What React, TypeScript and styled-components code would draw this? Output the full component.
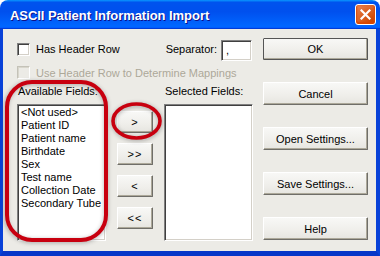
import React from "react";
import styled, { createGlobalStyle } from "styled-components";

const AVAILABLE_FIELDS = [
  "<Not used>",
  "Patient ID",
  "Patient name",
  "Birthdate",
  "Sex",
  "Test name",
  "Collection Date",
  "Secondary Tube",
];

const MOVE_BUTTONS = [">", ">>", "<", "<<"];

const SIDE_BUTTONS = ["Cancel", "Open Settings...", "Save Settings...", "Help"];

const GlobalStyle = createGlobalStyle`
  html, body {
    margin: 0;
    padding: 0;
    background: #ffffff;
  }
  * {
    box-sizing: border-box;
  }
`;

const App = () => {
  return (
    <>
      <GlobalStyle />
      <Window>
        <TitleBar>
          <TitleText>ASCII Patient Information Import</TitleText>
          <CloseButton>
            <svg width="11" height="11" viewBox="0 0 11 11">
              <path d="M1.5 1.5 L9.5 9.5 M9.5 1.5 L1.5 9.5" stroke="#fff" strokeWidth="2.2" strokeLinecap="square" />
            </svg>
          </CloseButton>
        </TitleBar>
        <Body>
          <LeftPanel>
            <TopRow>
              <CheckRow>
                <CheckBox />
                <span>Has Header Row</span>
              </CheckRow>
              <SeparatorGroup>
                <span>Separator:</span>
                <SeparatorInput>,</SeparatorInput>
              </SeparatorGroup>
            </TopRow>
            <CheckRow $disabled>
              <CheckBox $disabled />
              <span>Use Header Row to Determine Mappings</span>
            </CheckRow>
            <FieldsGrid>
              <FieldLabel>Available Fields:</FieldLabel>
              <span />
              <FieldLabel>Selected Fields:</FieldLabel>
              <ListBox>
                {AVAILABLE_FIELDS.map((field) => (
                  <ListItem key={field}>{field}</ListItem>
                ))}
              </ListBox>
              <MoveColumn>
                {MOVE_BUTTONS.map((label) => (
                  <MoveButton key={label}>{label}</MoveButton>
                ))}
              </MoveColumn>
              <ListBox />
            </FieldsGrid>
          </LeftPanel>
          <ButtonColumn>
            <DialogButton $default>OK</DialogButton>
            {SIDE_BUTTONS.map((label) => (
              <DialogButton key={label}>{label}</DialogButton>
            ))}
          </ButtonColumn>
        </Body>
        <Annotations width="380" height="256" viewBox="0 0 380 256">
          <defs>
            <filter id="soft" x="-20%" y="-20%" width="140%" height="140%">
              <feGaussianBlur stdDeviation="2" />
            </filter>
          </defs>
          <g filter="url(#soft)" opacity="0.45" stroke="#555" strokeWidth="4" fill="none">
            <rect x="6" y="83" width="100" height="158" rx="25" />
            <ellipse cx="137" cy="122" rx="23.5" ry="17" />
          </g>
          <g stroke="#c8000f" strokeWidth="4" fill="none">
            <rect x="7" y="82" width="99" height="158" rx="25" />
            <ellipse cx="136.5" cy="121" rx="23.5" ry="17" strokeWidth="3.6" />
          </g>
        </Annotations>
      </Window>
    </>
  );
};

const Window = styled.div`
  position: relative;
  width: 380px;
  height: 256px;
  font-family: "Liberation Sans", Arial, sans-serif;
  font-size: 11px;
  color: #000;
`;

const TitleBar = styled.div`
  display: flex;
  align-items: center;
  justify-content: space-between;
  height: 29px;
  padding: 0 4px 0 10px;
  border-radius: 8px 8px 0 0;
  background: linear-gradient(
    180deg,
    #0997ff 0%,
    #0053ee 8%,
    #0050ee 40%,
    #0066ff 88%,
    #0066ff 93%,
    #005bff 95%,
    #003dd7 96%,
    #003dd7 100%
  );
`;

const TitleText = styled.span`
  color: #fff;
  font-weight: bold;
  font-size: 13px;
  letter-spacing: -0.05px;
  text-shadow: 1px 1px #0f1089;
  padding-top: 1px;
`;

const CloseButton = styled.div`
  display: flex;
  align-items: center;
  justify-content: center;
  width: 21px;
  height: 21px;
  border: 1px solid #fff;
  border-radius: 3px;
  background: radial-gradient(circle at 85% 85%, #cc4600 0%, #dc6527 55%, #e88c5f 100%);
  box-shadow: inset 0 -1px 2px 1px #da4600;
`;

const Body = styled.div`
  display: flex;
  height: 227px;
  padding: 9px 0 0 14px;
  gap: 10px;
  background: #ecebe6;
  border-left: 3px solid #0841d8;
  border-right: 4px solid #0841d8;
  border-bottom: 5px solid #0736c8;
`;

const LeftPanel = styled.div`
  display: flex;
  flex-direction: column;
  width: 236px;
`;

const TopRow = styled.div`
  display: flex;
  align-items: center;
  justify-content: space-between;
  height: 22px;
  margin-bottom: 6px;
`;

const CheckRow = styled.label<{ $disabled?: boolean }>`
  display: flex;
  align-items: center;
  gap: 6px;
  height: 13px;
  color: ${(p) => (p.$disabled ? "#aca899" : "#000")};
`;

const CheckBox = styled.span<{ $disabled?: boolean }>`
  display: block;
  width: 13px;
  height: 13px;
  background: ${(p) => (p.$disabled ? "#ecebe6" : "#fff")};
  border: 1px solid;
  border-color: ${(p) => (p.$disabled ? "#c4c2b8 #fff #fff #c4c2b8" : "#808080 #fff #fff #808080")};
  box-shadow: ${(p) =>
    p.$disabled ? "inset 1px 1px #d8d6cc" : "inset 1px 1px #404040, inset -1px -1px #d4d0c8"};
`;

const SeparatorGroup = styled.div`
  display: flex;
  align-items: center;
  gap: 4px;
  margin-right: 1px;
`;

const SeparatorInput = styled.div`
  width: 31px;
  height: 21px;
  margin-top: 2px;
  padding: 3px 0 0 4px;
  background: #fff;
  border: 1px solid;
  border-color: #808080 #fff #fff #808080;
  box-shadow: inset 1px 1px #404040, inset -1px -1px #d4d0c8;
`;

const FieldsGrid = styled.div`
  display: grid;
  grid-template-columns: 89px 36px 89px;
  grid-template-rows: 13px 137px;
  column-gap: 11px;
  row-gap: 6px;
  margin-top: 6px;
`;

const FieldLabel = styled.span`
  line-height: 13px;
  padding-left: 1px;
`;

const ListBox = styled.div`
  display: flex;
  flex-direction: column;
  padding: 0 0 0 2px;
  background: #fff;
  border: 1px solid;
  border-color: #808080 #fff #fff #808080;
  box-shadow: inset 1px 1px #404040, inset -1px -1px #d4d0c8;
`;

const ListItem = styled.div`
  line-height: 13px;
  padding-left: 1px;
  white-space: nowrap;
  &:first-child {
    margin-top: 1px;
  }
`;

const MoveColumn = styled.div`
  display: flex;
  flex-direction: column;
  gap: 10px;
  padding-top: 7px;
`;

const ButtonBase = styled.button`
  display: flex;
  align-items: center;
  justify-content: center;
  padding: 0;
  margin: 0;
  font-family: "Liberation Sans", Arial, sans-serif;
  font-size: 11px;
  color: #000;
  background: linear-gradient(180deg, #f8f8f6 0%, #efeeea 60%, #e6e5e0 100%);
  border: 1px solid;
  border-color: #fff #6f6e69 #6f6e69 #fff;
  box-shadow: inset -1px -1px #aca899;
  border-radius: 1px;
  cursor: pointer;
`;

const MoveButton = styled(ButtonBase)`
  width: 36px;
  height: 22px;
  letter-spacing: 1px;
`;

const DialogButton = styled(ButtonBase)<{ $default?: boolean }>`
  width: 105px;
  height: 23px;
  ${(p) => (p.$default ? "outline: 1px solid #555; outline-offset: -1px; height: 22px;" : "")}
`;

const ButtonColumn = styled.div`
  display: flex;
  flex-direction: column;
  gap: 22px;
  width: 105px;
`;

const Annotations = styled.svg`
  position: absolute;
  top: 0;
  left: 0;
  pointer-events: none;
`;

export default App;
